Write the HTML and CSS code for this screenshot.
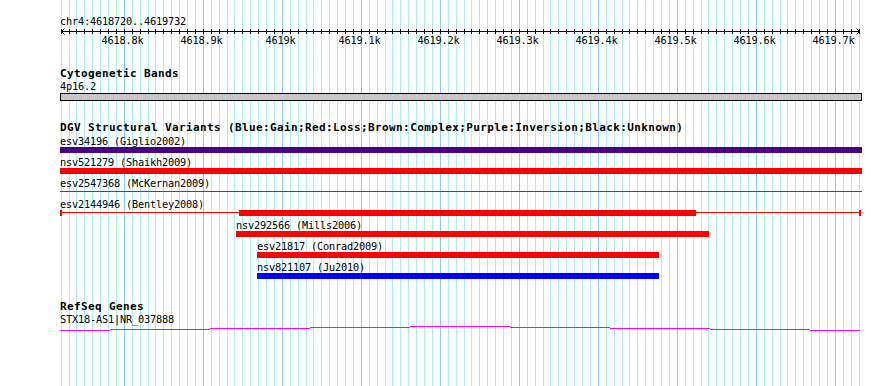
FILE: index.html
```html
<!DOCTYPE html>
<html>
<head>
    <link rel="stylesheet" href="styles.css">
</head>
<body>
    <div class="canvas">
        <svg class="grid" id="grid" width="890" height="386"></svg>
        <div class="tracks">
            <div class="ruler">
                <div class="label">chr4:4618720..4619732</div>
                <svg class="axis" id="axis" width="802" height="20">
                    <rect x="1" y="4" width="799" height="1" fill="#000"></rect>
                    <path d="M4.5 1.5 L1.5 4.5 L4.5 7.5" class="arrow"></path>
                    <path d="M796.5 1.5 L799.5 4.5 L796.5 7.5" class="arrow"></path>
                </svg>
            </div>

            <div class="track cyto">
                <div class="track-title">Cytogenetic Bands</div>
                <div class="label">4p16.2</div>
                <div class="band"></div>
            </div>

            <div class="track dgv">
                <div class="track-title">DGV Structural Variants (Blue:Gain;Red:Loss;Brown:Complex;Purple:Inversion;Black:Unknown)</div>
                <div class="features">
                    <div class="feature">
                        <div class="label">esv34196 (Giglio2002)</div>
                        <div class="lane"><div class="bar inversion" style="margin-left: 0; width: 802px;"></div></div>
                    </div>
                    <div class="feature">
                        <div class="label">nsv521279 (Shaikh2009)</div>
                        <div class="lane"><div class="bar loss" style="margin-left: 0; width: 802px;"></div></div>
                    </div>
                    <div class="feature">
                        <div class="label">esv2547368 (McKernan2009)</div>
                        <div class="lane"><div class="connector" style="margin-left: 0; width: 802px;"></div></div>
                    </div>
                    <div class="feature">
                        <div class="label">esv2144946 (Bentley2008)</div>
                        <div class="lane">
                            <div class="cap"></div>
                            <div class="connector" style="width: 177px;"></div>
                            <div class="bar loss" style="width: 457px;"></div>
                            <div class="connector" style="width: 163px;"></div>
                            <div class="cap"></div>
                        </div>
                    </div>
                    <div class="feature">
                        <div class="label" style="padding-left: 176px;">nsv292566 (Mills2006)</div>
                        <div class="lane"><div class="bar loss" style="margin-left: 176px; width: 473px;"></div></div>
                    </div>
                    <div class="feature">
                        <div class="label" style="padding-left: 197px;">esv21817 (Conrad2009)</div>
                        <div class="lane"><div class="bar loss" style="margin-left: 197px; width: 402px;"></div></div>
                    </div>
                    <div class="feature">
                        <div class="label" style="padding-left: 197px;">nsv821107 (Ju2010)</div>
                        <div class="lane"><div class="bar gain" style="margin-left: 197px; width: 402px;"></div></div>
                    </div>
                </div>
            </div>

            <div class="track refseq">
                <div class="track-title">RefSeq Genes</div>
                <div class="label">STX18-AS1|NR_037888</div>
                <svg class="gene" width="802" height="7">
                    <rect x="0" y="5" width="50" height="1"></rect>
                    <rect x="50" y="4" width="100" height="1"></rect>
                    <rect x="150" y="3" width="100" height="1"></rect>
                    <rect x="250" y="2" width="100" height="1"></rect>
                    <rect x="350" y="1" width="100" height="1"></rect>
                    <rect x="450" y="2" width="100" height="1"></rect>
                    <rect x="550" y="3" width="100" height="1"></rect>
                    <rect x="650" y="4" width="100" height="1"></rect>
                    <rect x="750" y="5" width="50" height="1"></rect>
                </svg>
            </div>
        </div>
    </div>
    <script>
        var NS = "http://www.w3.org/2000/svg";
        var grid = document.getElementById("grid");
        var axis = document.getElementById("axis");

        // one line every 10 bp, a darker one every 100 bp
        for (var i = 0; i <= 101; i++) {
            var x = Math.round(60.6 + i * 7.9);
            var major = i % 10 === 8;

            var line = document.createElementNS(NS, "rect");
            line.setAttribute("x", x);
            line.setAttribute("y", 0);
            line.setAttribute("width", 1);
            line.setAttribute("height", 386);
            line.setAttribute("class", major ? "major" : "minor");
            grid.appendChild(line);

            var tick = document.createElementNS(NS, "rect");
            tick.setAttribute("x", x - 60);
            tick.setAttribute("y", 2);
            tick.setAttribute("width", 1);
            tick.setAttribute("height", 5);
            axis.appendChild(tick);

            if (major) {
                var bp = 4618720 + i * 10;
                var text = document.createElementNS(NS, "text");
                text.setAttribute("x", x - 61.5);
                text.setAttribute("y", 17);
                text.setAttribute("text-anchor", "middle");
                text.textContent = (bp / 1000) + "k";
                axis.appendChild(text);
            }
        }
    </script>
</body>
</html>
```

FILE: styles.css
```css
body {
    margin: 0;
    background-color: rgb(255, 255, 255);
    font-family: "DejaVu Sans Mono", "Liberation Mono", monospace;
    color: rgb(0, 0, 0);
}
.canvas {
    position: relative;
    width: 890px;
    height: 386px;
    overflow: hidden;
}
.grid {
    position: absolute;
    top: 0;
    left: 0;
    shape-rendering: crispEdges;
}
.grid .minor {
    fill: rgb(175, 238, 238);
}
.grid .major {
    fill: rgb(135, 206, 235);
}
.tracks {
    position: relative;
    padding-top: 15px;
    padding-left: 60px;
}
.label {
    font-size: 10.3px;
    letter-spacing: -0.2px;
    line-height: 12px;
    height: 12px;
    white-space: nowrap;
}
.axis {
    display: block;
    shape-rendering: crispEdges;
    fill: rgb(0, 0, 0);
}
.axis text {
    font-family: "DejaVu Sans Mono", "Liberation Mono", monospace;
    font-size: 10.3px;
    letter-spacing: -0.2px;
}
.axis .arrow {
    fill: none;
    stroke: rgb(0, 0, 0);
    stroke-width: 1;
    shape-rendering: auto;
}
.track-title {
    font-size: 11px;
    font-weight: bold;
    letter-spacing: 0.38px;
    line-height: 13px;
    height: 13px;
    white-space: nowrap;
}
.cyto .track-title {
    margin-top: 20px;
}
.dgv .track-title {
    margin-top: 20px;
}
.refseq .track-title {
    margin-top: 18px;
}
.band {
    margin-top: 1px;
    width: 802px;
    height: 8px;
    box-sizing: border-box;
    border: 1px solid rgb(0, 0, 0);
    background-color: rgb(200, 200, 200);
}
.features {
    margin-top: 1px;
}
.feature {
    height: 21px;
}
.lane {
    display: flex;
    height: 6px;
}
.bar {
    height: 6px;
    flex: none;
}
.bar.loss {
    background-color: rgb(255, 0, 0);
}
.bar.gain {
    background-color: rgb(0, 0, 255);
}
.bar.inversion {
    background-color: rgb(75, 0, 130);
}
.connector {
    flex: none;
    height: 6px;
    background: linear-gradient(rgb(255, 0, 0), rgb(255, 0, 0)) no-repeat 0 2px / 100% 1px;
}
.cap {
    flex: none;
    width: 2px;
    height: 6px;
    background-color: rgb(255, 0, 0);
}
.gene {
    display: block;
    fill: rgb(255, 0, 255);
    shape-rendering: crispEdges;
}
```
